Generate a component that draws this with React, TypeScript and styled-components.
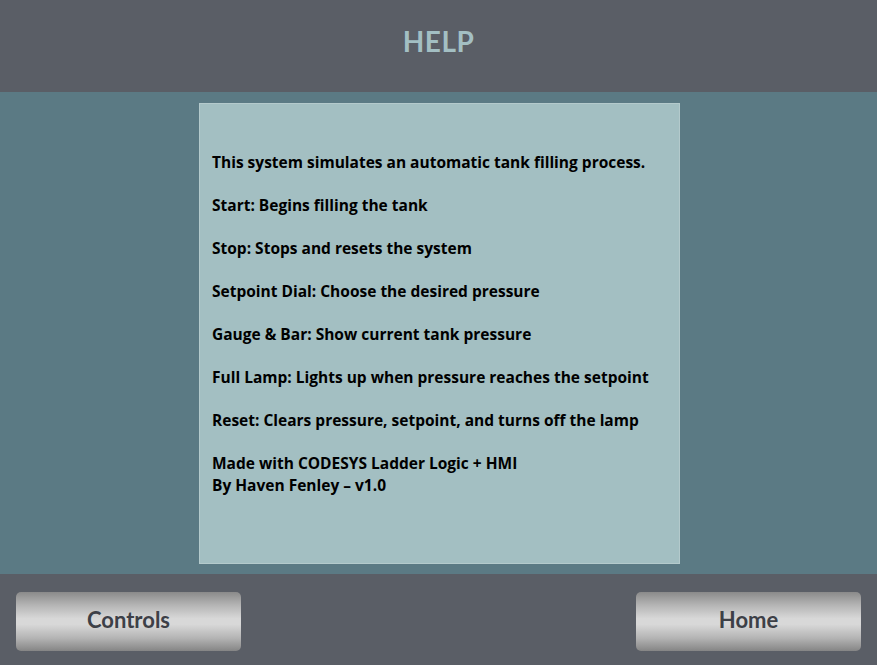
import React from "react";
import styled, { createGlobalStyle } from "styled-components";

const Global = createGlobalStyle`
  html, body { margin: 0; padding: 0; }
  body { width: 877px; height: 665px; overflow: hidden; font-family: "Open Sans", Lato, sans-serif; }
`;

const Screen = styled.div`
  width: 877px;
  height: 665px;
  display: grid;
  grid-template-rows: 92px 1fr 91px;
`;

const Header = styled.header`
  background: #5a5e66;
  display: flex;
  align-items: center;
  justify-content: center;
  padding-bottom: 10px;
  box-sizing: border-box;
`;

const Title = styled.h1`
  margin: 0;
  color: #a3bfc3;
  font-family: Lato, "Open Sans", sans-serif;
  font-size: 28px;
  font-weight: 700;
  letter-spacing: 0.5px;
`;

const Main = styled.main`
  background: #5b7a84;
  display: flex;
  justify-content: center;
  padding: 11px 0 10px 2px;
`;

const Panel = styled.section`
  width: 481px;
  box-sizing: border-box;
  background: #a3bfc2;
  border: 1px solid #b4cacc;
  padding: 48px 12px 0 12px;
  color: #000;
  font-size: 15.5px;
  font-weight: 700;
  line-height: 21.5px;
`;

const Para = styled.p`
  margin: 0 0 21.5px 0;
`;

const Footer = styled.footer`
  background: #5a5e66;
  display: flex;
  justify-content: space-between;
  align-items: flex-start;
  padding: 18px 16px 0 16px;
`;

const NavButton = styled.button`
  width: 225px;
  height: 59px;
  border: none;
  border-radius: 5px;
  padding: 0 0 4px 0;
  background: linear-gradient(
    to bottom,
    #8a8a8a 0%,
    #b4b4b4 22%,
    #d8d8d8 45%,
    #d8d8d8 55%,
    #b4b4b4 78%,
    #858585 100%
  );
  color: #3d4047;
  font-family: Lato, "Open Sans", sans-serif;
  font-size: 22px;
  font-weight: 700;
  cursor: pointer;
`;

const lines = [
  "This system simulates an automatic tank filling process.",
  "Start: Begins filling the tank",
  "Stop: Stops and resets the system",
  "Setpoint Dial: Choose the desired pressure",
  "Gauge & Bar: Show current tank pressure",
  "Full Lamp: Lights up when pressure reaches the setpoint",
  "Reset: Clears pressure, setpoint, and turns off the lamp",
];

export default function App() {
  return (
    <>
      <Global />
      <Screen>
        <Header>
          <Title>HELP</Title>
        </Header>
        <Main>
          <Panel>
            {lines.map((l) => (
              <Para key={l}>{l}</Para>
            ))}
            <Para>
              Made with CODESYS Ladder Logic + HMI
              <br />
              By Haven Fenley – v1.0
            </Para>
          </Panel>
        </Main>
        <Footer>
          <NavButton>Controls</NavButton>
          <NavButton>Home</NavButton>
        </Footer>
      </Screen>
    </>
  );
}
